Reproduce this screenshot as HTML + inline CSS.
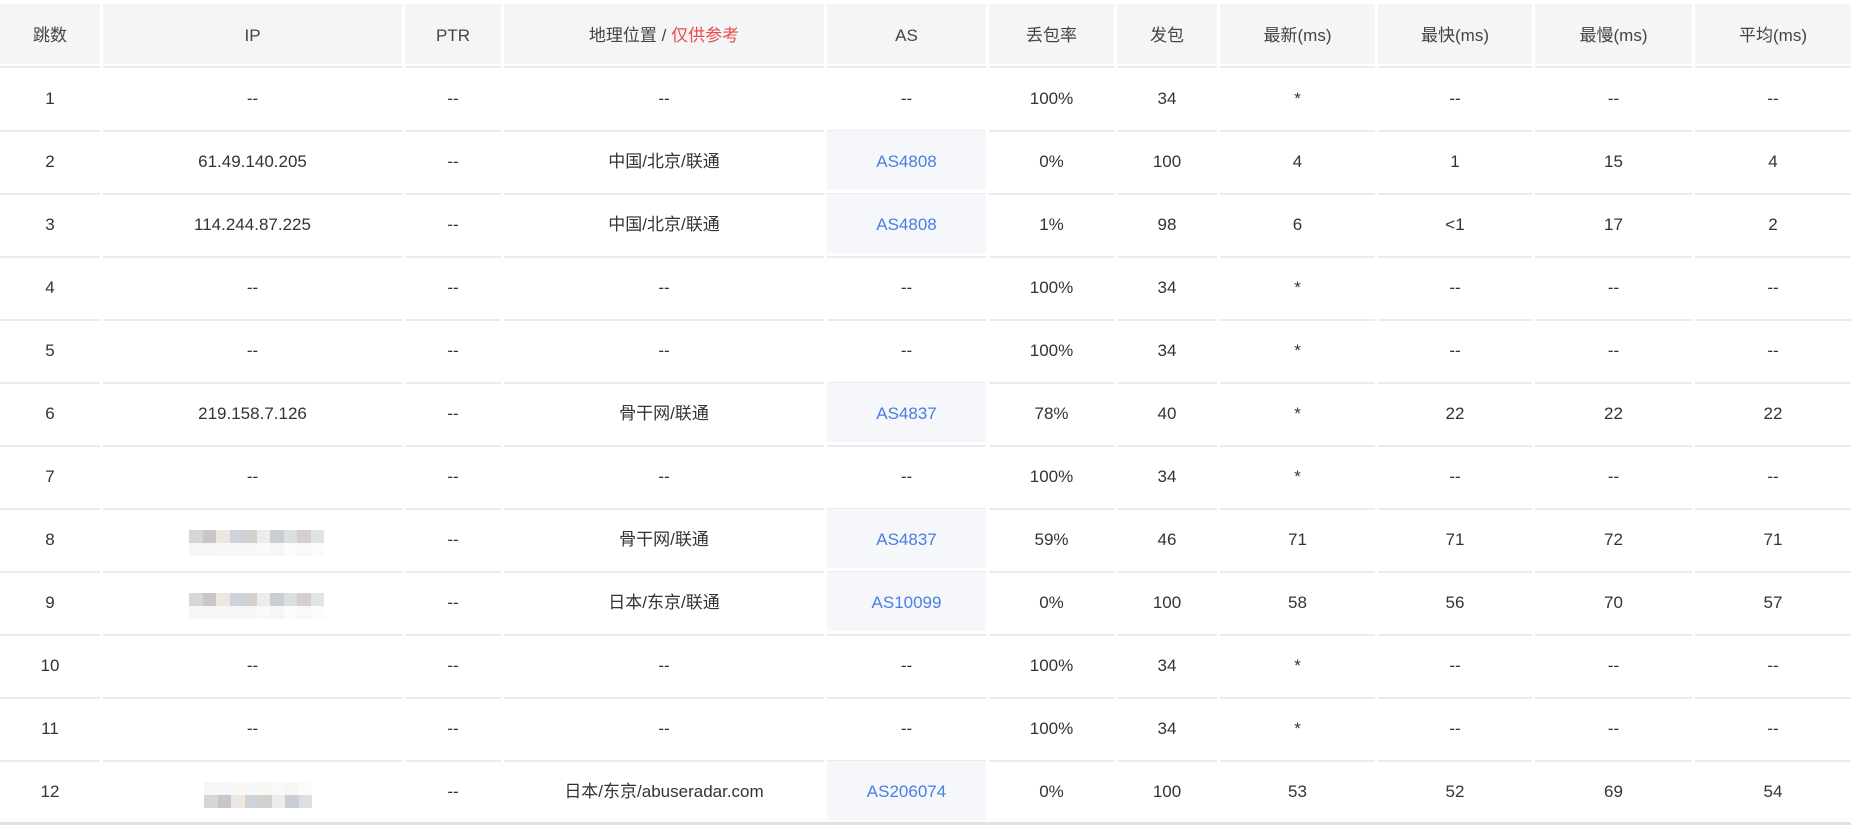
<!DOCTYPE html>
<html><head><meta charset="utf-8"><style>
*{margin:0;padding:0;box-sizing:border-box}
body{width:1851px;height:825px;background:#fff;font-family:"Liberation Sans","Noto Sans CJK SC",sans-serif;font-size:17px;color:#333;position:relative;overflow:hidden}
.c{position:absolute;display:flex;align-items:center;justify-content:center;white-space:nowrap;line-height:20px}
.c>b{font-weight:normal;display:block;height:20px;line-height:20px}
.h{background:#f5f5f6;color:#444}
.l{position:absolute;height:2px;background:#e9ecee}
.as{background:#f5f7fa;color:#4a7ee2}
.r{color:#e54d4d}
.bl{position:absolute;display:flex}
.bl span{display:block;width:13.5px;height:13px}
</style></head><body>
<div id="t"></div>
<script>
const X=[0,101,403,502,825,987,1115,1218,1376,1533,1693,1851];
const H=['跳数','IP','PTR','地理位置 / <span class="r">仅供参考</span>','AS','丢包率','发包','最新(ms)','最快(ms)','最慢(ms)','平均(ms)'];
const D=[
['1','--','--','--','--','100%','34','*','--','--','--'],
['2','61.49.140.205','--','中国/北京/联通','AS4808','0%','100','4','1','15','4'],
['3','114.244.87.225','--','中国/北京/联通','AS4808','1%','98','6','&lt;1','17','2'],
['4','--','--','--','--','100%','34','*','--','--','--'],
['5','--','--','--','--','100%','34','*','--','--','--'],
['6','219.158.7.126','--','骨干网/联通','AS4837','78%','40','*','22','22','22'],
['7','--','--','--','--','100%','34','*','--','--','--'],
['8','#','--','骨干网/联通','AS4837','59%','46','71','71','72','71'],
['9','#','--','日本/东京/联通','AS10099','0%','100','58','56','70','57'],
['10','--','--','--','--','100%','34','*','--','--','--'],
['11','--','--','--','--','100%','34','*','--','--','--'],
['12','#','--','日本/东京/abuseradar.com','AS206074','0%','100','53','52','69','54']];
let s='';
for(let j=0;j<11;j++){
 const x=X[j]+(j?2:0),w=X[j+1]-X[j]-(j?2:0)-(j<10?1:0);
 s+=`<div class="c h" style="left:${x}px;top:4px;width:${w}px;height:60px"><b style="margin-top:4px">${H[j]}</b></div>`;
 s+=`<div class="l" style="left:${x}px;top:66px;width:${w}px"></div>`;
}
const C1=['#d6d6d6','#c9c5c9','#ede7e2','#ccd3db','#d3d0ce','#ececec','#c9ced6','#dcdfe0','#d4cfcc','#e2e3e5'];
const C2=['#f6f6f8','#f5f6f8','#f9f8f6','#f7f8f9','#f9f7f4','#f9f9f9','#f6f6f6','#fafbfb','#f8f8fa','#fbfbfb'];
D.forEach((r,i)=>{
 const top=68+63*i;
 for(let j=0;j<11;j++){
  const x=X[j]+(j?2:0),w=X[j+1]-X[j]-(j?2:0)-(j<10?1:0);
  let v=r[j],cls='c';
  if(j==4&&v!='--'){cls+=' as';}
  if(j==1&&v=='#'){
   const a=i==11?C2:C1,b=i==11?C1:C2;
   const bx=i==11?204:189, n=i==11?8:10;
   s+=`<div class="bl" style="left:${bx}px;top:${top+21}px">${a.slice(0,n).map(c=>`<span style="background:${c}"></span>`).join('')}</div>`;
   s+=`<div class="bl" style="left:${bx}px;top:${top+34}px">${b.slice(0,n).map(c=>`<span style="background:${c}"></span>`).join('')}</div>`;
   v='';
  }
  const hh=cls.includes('as')?59:62;
  s+=`<div class="${cls}" style="left:${x}px;top:${top}px;width:${w}px;height:${hh}px"><b style="margin-top:${cls.includes('as')?3:0}px">${v}</b></div>`;
  s+=`<div class="l" style="left:${x}px;top:${top+62}px;width:${w}px"></div>`;
 }
});
s+='<div class="l" style="left:0;top:822px;width:1851px;height:3px;background:#dfe2e4"></div>';
document.getElementById('t').innerHTML=s;
</script>
</body></html>
